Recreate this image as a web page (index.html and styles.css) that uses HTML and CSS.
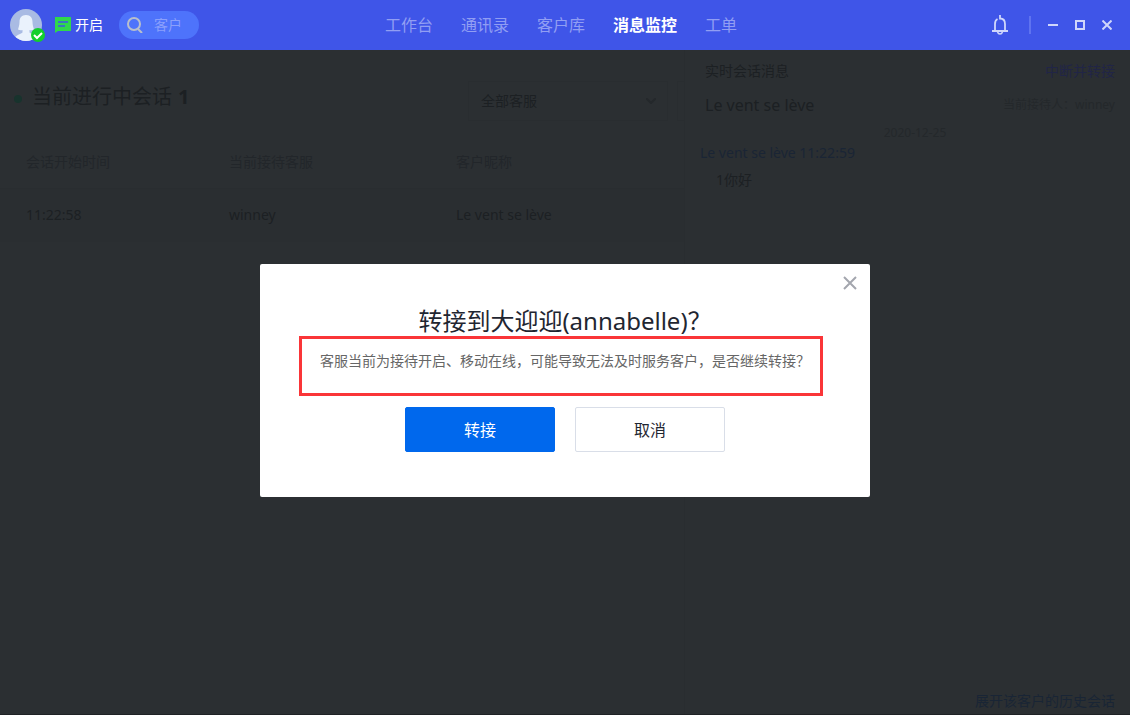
FILE: index.html
```html
<!DOCTYPE html>
<html lang="zh-CN">
<head>
    <meta charset="UTF-8">
    <meta name="viewport" content="width=device-width, initial-scale=1.0">
    <title>消息监控</title>
    <link rel="stylesheet" href="styles.css">
</head>
<body>
    <!-- Top bar -->
    <header class="topbar">
        <div class="account">
            <div class="avatar">
                <svg width="32" height="32" viewBox="0 0 32 32">
                    <defs><clipPath id="face"><circle cx="16" cy="16" r="16"/></clipPath></defs>
                    <g clip-path="url(#face)">
                        <rect width="32" height="32" fill="#a9bbe3"/>
                        <path d="M16 6c-4.600 0-6.500 3-6.500 7 0 3-1 5.500-1.500 7.500 1.500.8 3 .8 4.500.5v2.500c-1.500 1.500-5.500 2-7.500 5V33h22v-4.500c-2-3-6-3.500-7.500-5V21c1.500.3 3 .3 4.500-.5-.5-2-1.500-4.500-1.500-7.500 0-4-1.900-7-6.500-7z" fill="#eaf2fc"/>
                    </g>
                </svg>
                <svg class="avatar-badge" width="14" height="14" viewBox="0 0 14 14">
                    <circle cx="7" cy="7" r="7" fill="#12cf2c"/>
                    <path d="M3 7l3 3 5-5" fill="none" stroke="#fff" stroke-width="2"/>
                </svg>
            </div>
            <button class="status" type="button">
                <svg width="16" height="16" viewBox="0 0 16 16">
                    <path d="M0 0h16v14H3l-3 2z" fill="#2fd84c"/>
                    <path d="M3 5h10M3 9h7" stroke="#3f55e8" stroke-width="1.600"/>
                </svg>
                开启
            </button>
            <label class="search">
                <svg width="16" height="16" viewBox="0 0 16 16">
                    <circle cx="7" cy="7" r="6" fill="none" stroke="#b9c0cb" stroke-width="2"/>
                    <path d="M11 12l4 4" stroke="#b9c0cb" stroke-width="2"/>
                </svg>
                <input type="text" placeholder="客户" aria-label="客户">
            </label>
        </div>
        <nav class="menu">
            <a href="#">工作台</a>
            <a href="#">通讯录</a>
            <a href="#">客户库</a>
            <a href="#" class="active">消息监控</a>
            <a href="#">工单</a>
        </nav>
        <div class="window-tools">
            <button class="bell" type="button" aria-label="通知">
                <svg width="16" height="20" viewBox="0 0 16 20">
                    <path d="M8 0v3.500c3 0 5 2 5 5.500v6.500M3 15.500V9c0-2.500 1-4.200 2.500-5M0 16h16" fill="none" stroke="#cfd6fb" stroke-width="1.800"/>
                    <path d="M5.500 17c.5 1.300 1.400 2 2.500 2s2-.7 2.500-2" fill="none" stroke="#cfd6fb" stroke-width="1.600"/>
                </svg>
            </button>
            <span class="divider"></span>
            <button type="button" aria-label="最小化">
                <svg width="10" height="10" viewBox="0 0 10 10"><path d="M0 5h10" stroke="#cfd6fb" stroke-width="2"/></svg>
            </button>
            <button type="button" aria-label="最大化">
                <svg width="10" height="10" viewBox="0 0 10 10"><rect x="1" y="1" width="8" height="8" fill="none" stroke="#cfd6fb" stroke-width="2"/></svg>
            </button>
            <button type="button" aria-label="关闭">
                <svg width="10" height="10" viewBox="0 0 10 10"><path d="M.5.5l9 9M9.500.5l-9 9" stroke="#cfd6fb" stroke-width="2"/></svg>
            </button>
        </div>
    </header>

    <main class="page">
        <!-- Running sessions -->
        <section class="sessions">
            <div class="sessions-head">
                <h1>当前进行中会话 <strong>1</strong></h1>
                <div class="select-box">
                    <select aria-label="客服">
                        <option>全部客服</option>
                    </select>
                    <svg width="10" height="6" viewBox="0 0 10 6"><path d="M0 0l5 5 5-5" fill="none" stroke="#24282b" stroke-width="2"/></svg>
                </div>
                <div class="select-box next"></div>
            </div>
            <table>
                <thead>
                    <tr>
                        <th>会话开始时间</th>
                        <th>当前接待客服</th>
                        <th>客户昵称</th>
                    </tr>
                </thead>
                <tbody>
                    <tr>
                        <td>11:22:58</td>
                        <td>winney</td>
                        <td>Le vent se lève</td>
                    </tr>
                </tbody>
            </table>
        </section>

        <!-- Live messages -->
        <aside class="chat">
            <div class="chat-row">
                <h2>实时会话消息</h2>
                <a href="#" class="transfer-link">中断并转接</a>
            </div>
            <div class="chat-row customer">
                <h3>Le vent se lève</h3>
                <span class="agent">当前接待人：winney</span>
            </div>
            <div class="messages">
                <p class="date">2020-12-25</p>
                <p class="sender">Le vent se lève 11:22:59</p>
                <p class="text">1你好</p>
            </div>
            <div class="chat-foot">
                <a href="#">展开该客户的历史会话</a>
            </div>
        </aside>
    </main>

    <!-- Transfer dialog -->
    <div class="overlay">
        <div class="dialog" role="dialog" aria-labelledby="dialogTitle">
            <button class="close" type="button" aria-label="关闭">
                <svg width="14" height="14" viewBox="0 0 14 14"><path d="M1 1l12 12M13 1L1 13" stroke="#a3a6ae" stroke-width="2"/></svg>
            </button>
            <h2 id="dialogTitle">转接到大迎迎(annabelle)？</h2>
            <p>客服当前为接待开启、移动在线，可能导致无法及时服务客户，是否继续转接？</p>
            <div class="actions">
                <button class="btn primary" type="button">转接</button>
                <button class="btn" type="button">取消</button>
            </div>
            <div class="marker"></div>
        </div>
    </div>
</body>
</html>
```

FILE: styles.css
```css
* {
    box-sizing: border-box;
}
body {
    display: flex;
    flex-direction: column;
    min-height: 100vh;
    margin: 0;
    background-color: #2b2f32;
    color: #1c2023;
    font-family: "Noto Sans", "Noto Sans CJK SC", sans-serif;
    font-size: 14px;
    line-height: 20px;
}
h1, h2, h3, p {
    margin: 0;
    font-weight: 400;
}
a {
    text-decoration: none;
}
button {
    padding: 0;
    border: none;
    background: none;
    font: inherit;
    cursor: pointer;
}
svg {
    display: block;
    flex: none;
}

/* Top bar */
.topbar {
    display: grid;
    grid-template-columns: 1fr auto 1fr;
    align-items: center;
    height: 50px;
    padding-right: 8px;
    background-color: #3f55e8;
}
.account {
    display: flex;
    align-items: center;
    padding-left: 10px;
}
.avatar {
    position: relative;
}
.avatar-badge {
    position: absolute;
    right: -3px;
    bottom: -1px;
}
.status {
    display: flex;
    align-items: center;
    gap: 4px;
    margin: 0 16px 0 13px;
    color: #fff;
}
.search {
    display: flex;
    align-items: center;
    gap: 11px;
    width: 80px;
    height: 28px;
    padding-left: 8px;
    border-radius: 14px;
    background-color: #4e73fb;
}
.search input {
    width: 36px;
    padding: 0;
    border: none;
    outline: none;
    background: none;
    color: #fff;
    font: inherit;
}
.search input::placeholder {
    color: #8ba0fb;
}
.menu {
    display: flex;
    gap: 28px;
    font-size: 16px;
}
.menu a {
    color: #919ef3;
}
.menu a.active {
    color: #fff;
    font-weight: 700;
}
.window-tools {
    display: flex;
    align-items: center;
    justify-content: flex-end;
    gap: 17px;
    padding-right: 10px;
}
.bell {
    margin-right: 4px;
}
.divider {
    width: 2px;
    height: 18px;
    background-color: #5f73f0;
}

/* Page behind the dialog */
.page {
    display: flex;
    flex: 1;
    border-bottom: 1px solid #1f2225;
}
.sessions {
    flex: 1;
    min-width: 0;
    overflow: hidden;
    border-right: 1px solid #292d30;
}
.sessions-head {
    display: flex;
    align-items: center;
    gap: 9px;
    padding: 31px 0 16px 14px;
}
.sessions-head h1 {
    display: flex;
    flex: 1;
    align-items: center;
    gap: 6px;
    padding-bottom: 8px;
    font-size: 20px;
    line-height: 24px;
}
.sessions-head h1::before {
    content: "";
    width: 8px;
    height: 8px;
    margin: 4px 4px 0 0;
    border-radius: 50%;
    background-color: #18332d;
}
.sessions-head strong {
    font-weight: 700;
}
.select-box {
    display: flex;
    align-items: center;
    width: 200px;
    height: 40px;
    padding: 0 11px 0 12px;
    border: 1px solid #292d30;
}
.select-box.next {
    width: 7px;
    padding: 0;
    border-right: none;
}
.select-box select {
    flex: 1;
    appearance: none;
    padding: 0;
    border: none;
    background: none;
    color: inherit;
    font: inherit;
}
table {
    width: 100%;
    table-layout: fixed;
    border-collapse: collapse;
}
th, td {
    height: 54px;
    padding: 0 0 0 26px;
    text-align: left;
}
th {
    height: 51px;
    border-bottom: 1px solid #292d30;
    color: #22262a;
    font-weight: 400;
}
th:first-child {
    width: 203px;
}
th:nth-child(2) {
    width: 227px;
}
tbody tr {
    background-color: #2a2e31;
}

/* Live messages */
.chat {
    display: flex;
    flex-direction: column;
    flex: 0 0 445px;
    padding: 11px 15px 0 20px;
}
.chat-row {
    display: flex;
    align-items: center;
    justify-content: space-between;
}
.chat-row h2 {
    font-size: 14px;
}
.transfer-link {
    color: #212546;
}
.customer {
    margin-top: 14px;
}
.customer h3 {
    font-size: 16px;
}
.agent {
    color: #24282b;
    font-size: 12px;
}
.messages {
    flex: 1;
    margin: 8px -15px 0 -5px;
}
.date {
    color: #24282b;
    font-size: 12px;
    text-align: center;
}
.sender {
    color: #1a2535;
}
.text {
    margin: 7px 16px;
}
.chat-foot {
    padding: 12px 0 3px;
    text-align: right;
}
.chat-foot a {
    color: #192535;
}

/* Transfer dialog */
.overlay {
    position: fixed;
    top: 50px;
    right: 0;
    bottom: 4px;
    left: 0;
    display: flex;
    align-items: center;
    justify-content: center;
}
.dialog {
    position: relative;
    width: 610px;
    padding: 41px 20px 45px;
    border-radius: 2px;
    background-color: #fff;
    color: #1f2631;
    text-align: center;
}
.dialog h2 {
    font-size: 24px;
    line-height: 32px;
}
.dialog p {
    margin-top: 14px;
    color: #666;
}
.close {
    position: absolute;
    top: 12px;
    right: 13px;
}
.actions {
    display: flex;
    justify-content: center;
    gap: 20px;
    margin-top: 36px;
}
.btn {
    width: 150px;
    height: 45px;
    border: 1px solid #d9dee8;
    border-radius: 2px;
    color: #1f2631;
    font-size: 16px;
}
.btn.primary {
    border-color: #0068ed;
    background-color: #0068ed;
    color: #fff;
}
.marker {
    position: absolute;
    top: 72px;
    left: 39px;
    width: 524px;
    height: 60px;
    border: 3px solid #fa3538;
}
```
